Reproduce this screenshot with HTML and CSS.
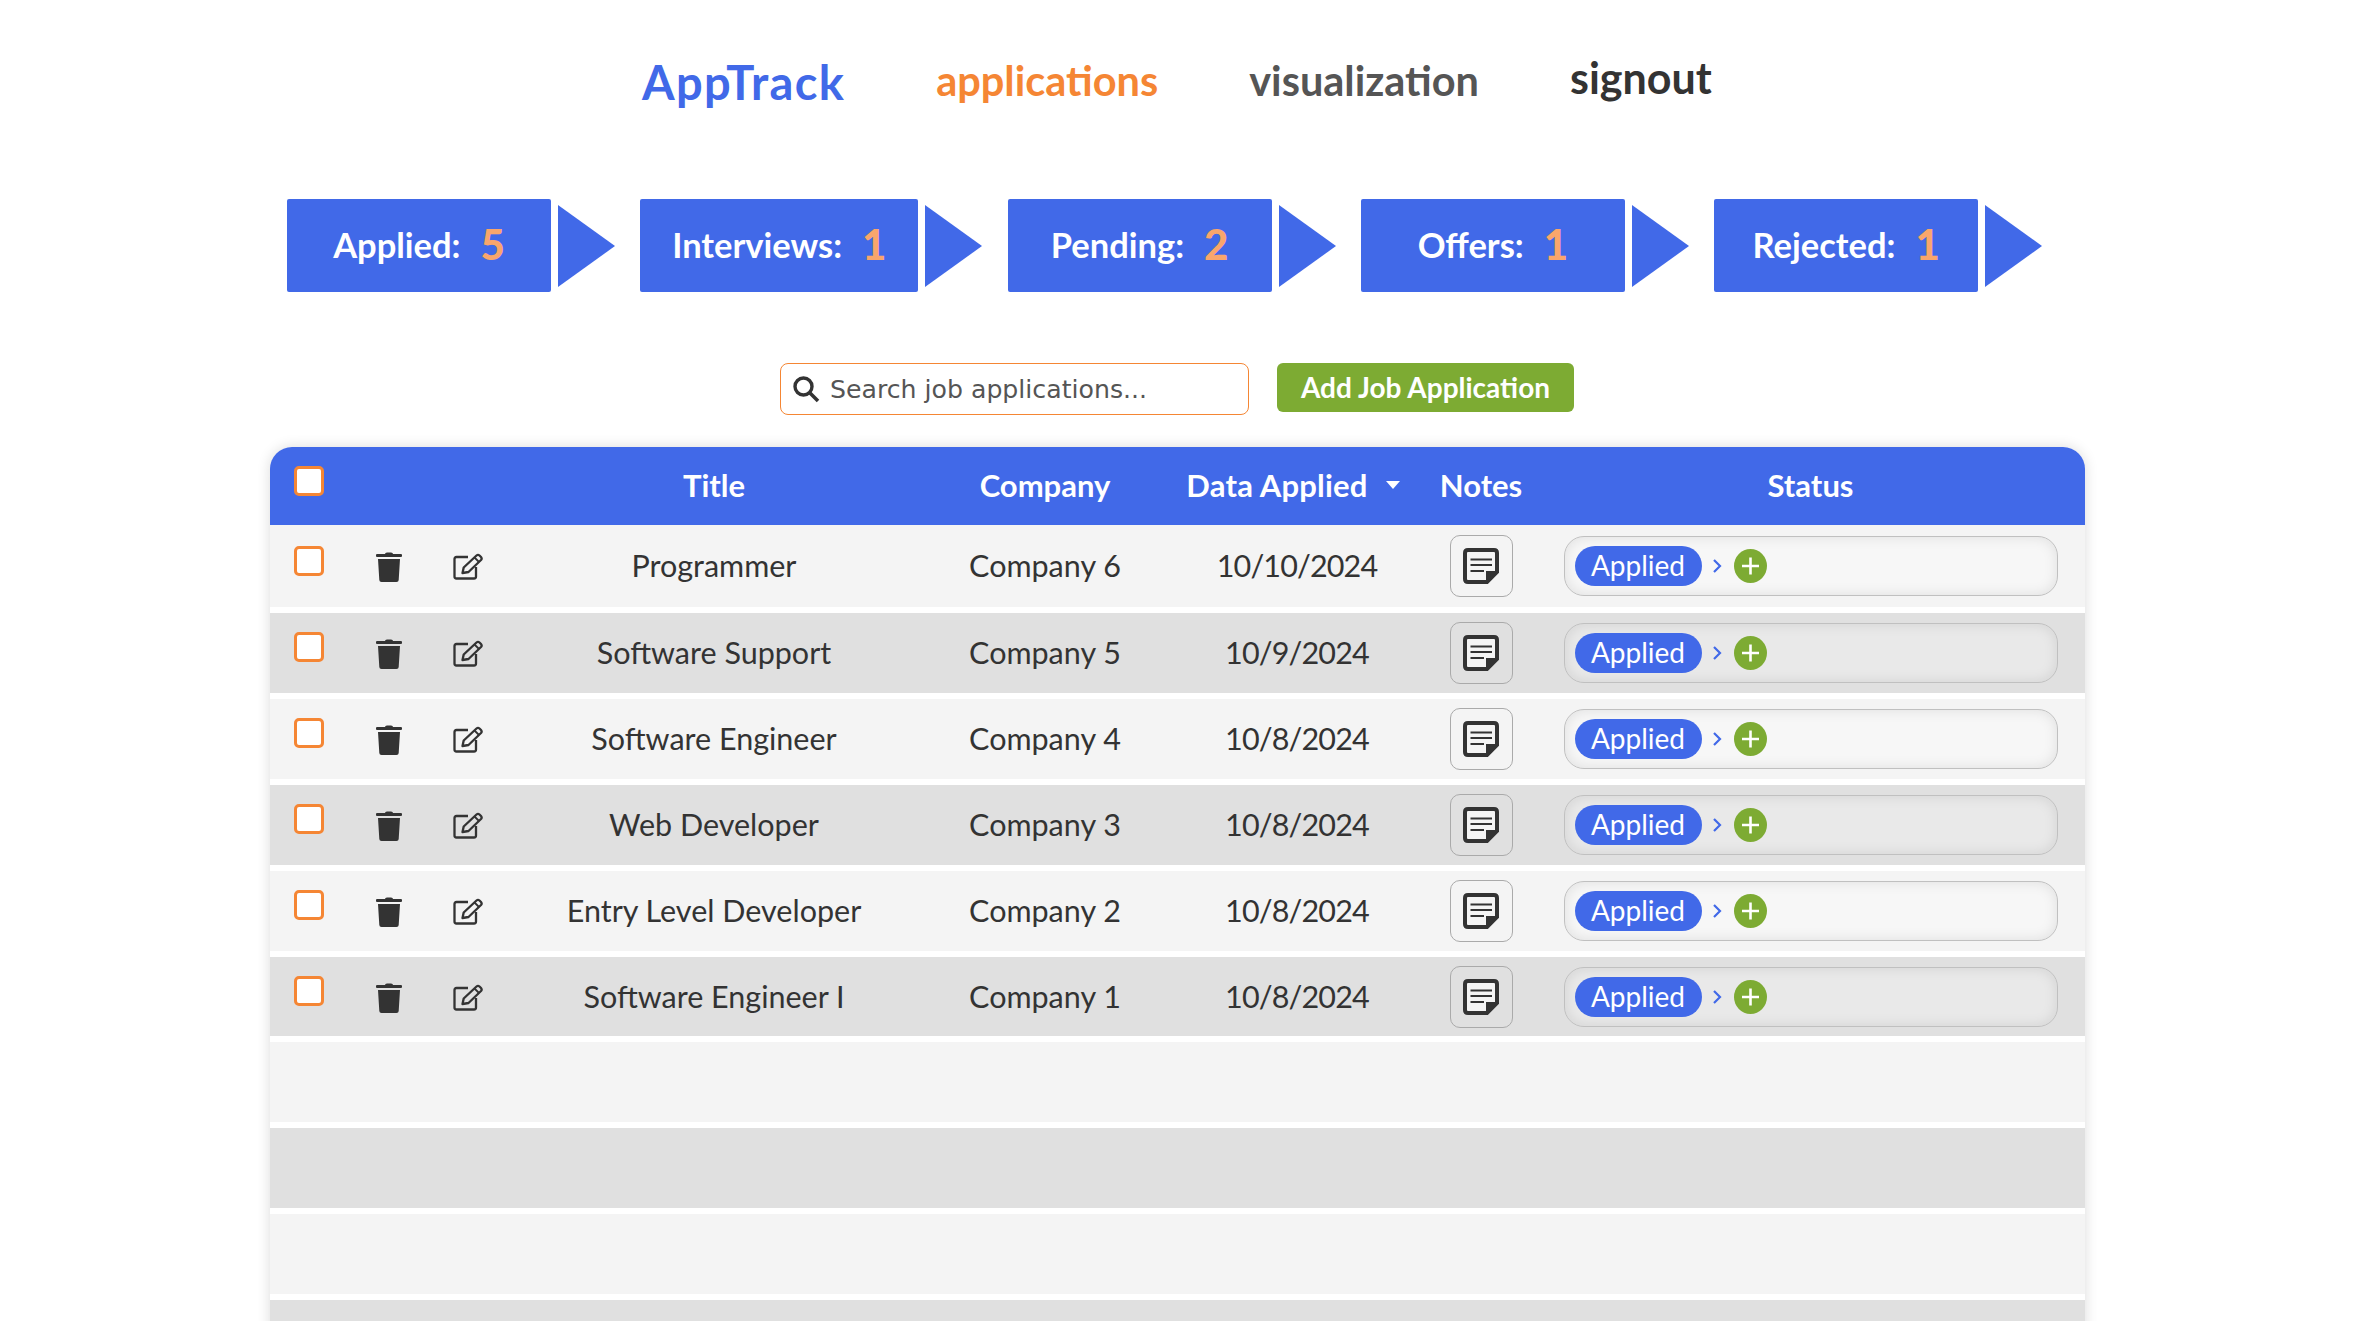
FILE: index.html
```html
<!DOCTYPE html>
<html lang="en">
<head>
    <meta charset="UTF-8">
    <title>AppTrack</title>
    <link rel="stylesheet" href="styles.css">
</head>
<body>

<svg class="icon-defs" aria-hidden="true">
    <symbol id="icon-trash" viewBox="0 0 26 30">
        <path fill="#333" d="M9 2Q9 .5 11 .5H15Q17 .5 17 2H25Q26 2 26 3.2V4Q26 5 25 5H1Q0 5 0 4V3.2Q0 2 1 2Z"/>
        <path fill="#333" d="M2 7H24L22.7 28Q22.6 30 20.5 30H5.5Q3.4 30 3.3 28Z"/>
    </symbol>
    <symbol id="icon-edit" viewBox="0 0 30 27">
        <path fill="none" stroke="#333" stroke-width="2.3" d="M15 4H3.5Q1.5 4 1.5 6V23.5Q1.5 25.5 3.5 25.5H21Q23 25.5 23 23.5V14"/>
        <path fill="none" stroke="#333" stroke-width="2.3" stroke-linejoin="round" d="M9.5 20L10.7 14.5L23.5 2.5Q25 1.2 26.5 2.5L28 4Q29.3 5.5 28 7L15.5 19Z"/>
        <path fill="none" stroke="#333" stroke-width="1.8" d="M21.5 4.5L26 9"/>
    </symbol>
    <symbol id="icon-note" viewBox="0 0 36 36">
        <path fill="#f4f4f4" stroke="#333" stroke-width="4" d="M5 2H31Q34 2 34 5V24L24 34H5Q2 34 2 31V5Q2 2 5 2Z"/>
        <path fill="#333" d="M23 23H35L23 35Z"/>
        <path fill="none" stroke="#333" stroke-width="2.2" d="M7.5 11.5H29M7.5 17H29M7.5 23H21"/>
    </symbol>
    <symbol id="icon-chevron" viewBox="0 0 10 14">
        <path fill="none" stroke="#4169e8" stroke-width="2.2" d="M2 1L8 7L2 13"/>
    </symbol>
    <symbol id="icon-plus" viewBox="0 0 33 34">
        <ellipse cx="16.5" cy="17" rx="16.5" ry="17" fill="#7dab33"/>
        <path fill="none" stroke="#fff" stroke-width="2.6" d="M16.5 8.5V25.5M8 17H25"/>
    </symbol>
</svg>

<div class="page">

    <nav class="nav">
        <a class="nav-brand">AppTrack</a>
        <a class="nav-link active">applications</a>
        <a class="nav-link">visualization</a>
        <a class="nav-link signout">signout</a>
    </nav>

    <div class="stages">
        <div class="stage"><div class="stage-box">Applied: <b>5</b></div><span class="stage-arrow"></span></div>
        <div class="stage"><div class="stage-box s-interviews">Interviews: <b>1</b></div><span class="stage-arrow"></span></div>
        <div class="stage"><div class="stage-box">Pending: <b>2</b></div><span class="stage-arrow"></span></div>
        <div class="stage"><div class="stage-box">Offers: <b>1</b></div><span class="stage-arrow"></span></div>
        <div class="stage"><div class="stage-box">Rejected: <b>1</b></div><span class="stage-arrow"></span></div>
    </div>

    <div class="toolbar">
        <label class="search">
            <svg class="search-icon" viewBox="0 0 28 28"><circle cx="11.5" cy="11.5" r="8.5" fill="none" stroke="#333" stroke-width="3.4"/><path d="M17.5 17.5L26 26" stroke="#333" stroke-width="3.6"/></svg>
            <input type="text" placeholder="Search job applications...">
        </label>
        <button type="button" class="add-btn">Add Job Application</button>
    </div>

    <div class="table">
        <div class="row head">
            <div class="c-check"><input type="checkbox" class="check"></div>
            <div></div>
            <div></div>
            <div>Title</div>
            <div>Company</div>
            <div class="c-date">Data Applied <span class="caret"></span></div>
            <div>Notes</div>
            <div>Status</div>
        </div>

        <div class="row first">
            <div class="c-check"><input type="checkbox" class="check"></div>
            <div><svg class="i-trash"><use href="#icon-trash"/></svg></div>
            <div><svg class="i-edit"><use href="#icon-edit"/></svg></div>
            <div class="cell-text">Programmer</div>
            <div class="cell-text">Company 6</div>
            <div class="cell-text cell-date">10/10/2024</div>
            <div><button type="button" class="note-btn"><svg class="i-note"><use href="#icon-note"/></svg></button></div>
            <div><div class="status"><span class="pill">Applied</span><svg class="i-chev"><use href="#icon-chevron"/></svg><svg class="i-plus"><use href="#icon-plus"/></svg></div></div>
        </div>
        <div class="row dark">
            <div class="c-check"><input type="checkbox" class="check"></div>
            <div><svg class="i-trash"><use href="#icon-trash"/></svg></div>
            <div><svg class="i-edit"><use href="#icon-edit"/></svg></div>
            <div class="cell-text">Software Support</div>
            <div class="cell-text">Company 5</div>
            <div class="cell-text cell-date">10/9/2024</div>
            <div><button type="button" class="note-btn"><svg class="i-note"><use href="#icon-note"/></svg></button></div>
            <div><div class="status"><span class="pill">Applied</span><svg class="i-chev"><use href="#icon-chevron"/></svg><svg class="i-plus"><use href="#icon-plus"/></svg></div></div>
        </div>
        <div class="row">
            <div class="c-check"><input type="checkbox" class="check"></div>
            <div><svg class="i-trash"><use href="#icon-trash"/></svg></div>
            <div><svg class="i-edit"><use href="#icon-edit"/></svg></div>
            <div class="cell-text">Software Engineer</div>
            <div class="cell-text">Company 4</div>
            <div class="cell-text cell-date">10/8/2024</div>
            <div><button type="button" class="note-btn"><svg class="i-note"><use href="#icon-note"/></svg></button></div>
            <div><div class="status"><span class="pill">Applied</span><svg class="i-chev"><use href="#icon-chevron"/></svg><svg class="i-plus"><use href="#icon-plus"/></svg></div></div>
        </div>
        <div class="row dark">
            <div class="c-check"><input type="checkbox" class="check"></div>
            <div><svg class="i-trash"><use href="#icon-trash"/></svg></div>
            <div><svg class="i-edit"><use href="#icon-edit"/></svg></div>
            <div class="cell-text">Web Developer</div>
            <div class="cell-text">Company 3</div>
            <div class="cell-text cell-date">10/8/2024</div>
            <div><button type="button" class="note-btn"><svg class="i-note"><use href="#icon-note"/></svg></button></div>
            <div><div class="status"><span class="pill">Applied</span><svg class="i-chev"><use href="#icon-chevron"/></svg><svg class="i-plus"><use href="#icon-plus"/></svg></div></div>
        </div>
        <div class="row">
            <div class="c-check"><input type="checkbox" class="check"></div>
            <div><svg class="i-trash"><use href="#icon-trash"/></svg></div>
            <div><svg class="i-edit"><use href="#icon-edit"/></svg></div>
            <div class="cell-text">Entry Level Developer</div>
            <div class="cell-text">Company 2</div>
            <div class="cell-text cell-date">10/8/2024</div>
            <div><button type="button" class="note-btn"><svg class="i-note"><use href="#icon-note"/></svg></button></div>
            <div><div class="status"><span class="pill">Applied</span><svg class="i-chev"><use href="#icon-chevron"/></svg><svg class="i-plus"><use href="#icon-plus"/></svg></div></div>
        </div>
        <div class="row dark">
            <div class="c-check"><input type="checkbox" class="check"></div>
            <div><svg class="i-trash"><use href="#icon-trash"/></svg></div>
            <div><svg class="i-edit"><use href="#icon-edit"/></svg></div>
            <div class="cell-text">Software Engineer I</div>
            <div class="cell-text">Company 1</div>
            <div class="cell-text cell-date">10/8/2024</div>
            <div><button type="button" class="note-btn"><svg class="i-note"><use href="#icon-note"/></svg></button></div>
            <div><div class="status"><span class="pill">Applied</span><svg class="i-chev"><use href="#icon-chevron"/></svg><svg class="i-plus"><use href="#icon-plus"/></svg></div></div>
        </div>
        <div class="row"></div>
        <div class="row dark"></div>
        <div class="row"></div>
        <div class="row dark"></div>
    </div>

</div>

</body>
</html>
```

FILE: styles.css
```css
html, body {
    height: 100%;
    overflow: hidden;
}
body {
    margin: 0;
    background-color: #fff;
    color: #333;
    font-family: 'Lato', 'Noto Sans', sans-serif;
}
.icon-defs {
    display: none;
}
.page {
    width: 1815px;
    margin-left: 270px;
}

/* nav */
.nav {
    display: flex;
    align-items: center;
    gap: 91px;
    height: 160px;
    padding-left: 372px;
    font-weight: 700;
    font-size: 41.5px;
}
.nav-brand {
    color: #4169e8;
    font-size: 47px;
    letter-spacing: 1.3px;
    margin-top: 4px;
}
.nav-link {
    color: #555;
}
.nav-link.active {
    color: #f58634;
}
.nav-link.signout {
    color: #333;
    font-size: 43px;
    margin-top: -5px;
}

/* stages */
.stages {
    display: flex;
    gap: 25.3px;
    margin-top: 39px;
    padding-left: 17px;
}
.stage {
    display: flex;
    align-items: center;
    gap: 7px;
}
.stage-box {
    box-sizing: border-box;
    width: 264px;
    height: 93px;
    display: flex;
    align-items: center;
    justify-content: center;
    gap: 20px;
    padding-bottom: 3px;
    background-color: #4169e8;
    border-radius: 2px;
    color: #fff;
    font-size: 34.5px;
    font-weight: 700;
}
.stage-box.s-interviews {
    width: 278px;
}
.stage-box b {
    color: #f9a66c;
    font-size: 42px;
}
.stage-arrow {
    width: 0;
    height: 0;
    border-top: 41px solid transparent;
    border-bottom: 41px solid transparent;
    border-left: 57px solid #4169e8;
}

/* search + add */
.toolbar {
    display: flex;
    align-items: flex-start;
    gap: 28px;
    margin-top: 71px;
    padding-left: 510px;
}
.search {
    box-sizing: border-box;
    width: 469px;
    height: 52px;
    display: flex;
    align-items: center;
    gap: 10px;
    padding-left: 11px;
    border: 1.5px solid #f58634;
    border-radius: 8px;
}
.search-icon {
    width: 28px;
    height: 28px;
}
.search input {
    flex: 1;
    min-width: 0;
    border: none;
    outline: none;
    background: none;
    padding: 0;
    font-family: 'DejaVu Sans', sans-serif;
    font-size: 25.2px;
    color: #555;
}
.search input::placeholder {
    color: #555;
    opacity: 1;
}
.add-btn {
    width: 297px;
    height: 49px;
    border: none;
    border-radius: 6px;
    padding: 0 0 2px;
    background-color: #7dab33;
    color: #fff;
    font-family: inherit;
    font-size: 28px;
    font-weight: 700;
}

/* table */
.table {
    display: flex;
    flex-direction: column;
    gap: 6px;
    margin-top: 32px;
    border-radius: 22px 22px 0 0;
    background-color: #fff;
    box-shadow: 0 0 14px rgba(0, 0, 0, 0.14);
}
.row {
    height: 79.9px;
    flex: none;
    display: grid;
    grid-template-columns: 80px 78px 78px 416px 246px 258px 110px 549px;
    align-items: center;
    justify-items: center;
    background-color: #f4f4f4;
    font-size: 30.5px;
    text-align: center;
}
.row.dark {
    background-color: #e0e0e0;
}
.row.first {
    height: 82px;
}
.row.head {
    height: 78px;
    margin-bottom: -6px;
    padding-bottom: 2px;
    box-sizing: border-box;
    border-radius: 22px 22px 0 0;
    background-color: #4169e8;
    color: #fff;
    font-size: 31px;
    font-weight: 700;
}
.cell-text {
    padding-bottom: 2px;
}
.cell-date {
    letter-spacing: -0.85px;
}
.c-check {
    align-self: start;
    padding-top: 19px;
    padding-right: 27px;
    line-height: 0;
}
.first .c-check {
    padding-top: 21px;
}
.check {
    appearance: none;
    display: block;
    box-sizing: border-box;
    width: 30px;
    height: 30px;
    margin: 0 0 0 24px;
    border: 3.5px solid #f58634;
    border-radius: 5px;
    background-color: #fff;
}
.c-date {
    display: flex;
    align-items: center;
    gap: 18px;
    margin-right: 8px;
    letter-spacing: 0.2px;
}
.caret {
    width: 0;
    height: 0;
    border-left: 7px solid transparent;
    border-right: 7px solid transparent;
    border-top: 8px solid #fff;
}

.row svg {
    display: block;
}
.i-trash {
    width: 26px;
    height: 30px;
    margin-top: 2px;
}
.i-edit {
    width: 30px;
    height: 27px;
    margin: 1px 0 0 1px;
}
.note-btn {
    box-sizing: border-box;
    display: flex;
    align-items: center;
    justify-content: center;
    width: 63px;
    height: 62px;
    padding: 0;
    border: 1.5px solid #aaa;
    border-radius: 10px;
    background: none;
}
.i-note {
    width: 36px;
    height: 36px;
}
.status {
    box-sizing: border-box;
    width: 494px;
    height: 60px;
    display: flex;
    align-items: center;
    padding-left: 10px;
    border: 1.5px solid #c0c0c0;
    border-radius: 20px;
    background-color: rgba(255, 255, 255, 0.3);
    box-shadow: inset 0 0 14px rgba(0, 0, 0, 0.1);
}
.pill {
    width: 127px;
    height: 40px;
    line-height: 38px;
    border-radius: 20px;
    background-color: #4169e8;
    color: #fff;
    font-size: 28px;
}
.i-chev {
    width: 10px;
    height: 14px;
    margin-left: 10px;
}
.i-plus {
    width: 33px;
    height: 34px;
    margin-left: 12px;
}
```
